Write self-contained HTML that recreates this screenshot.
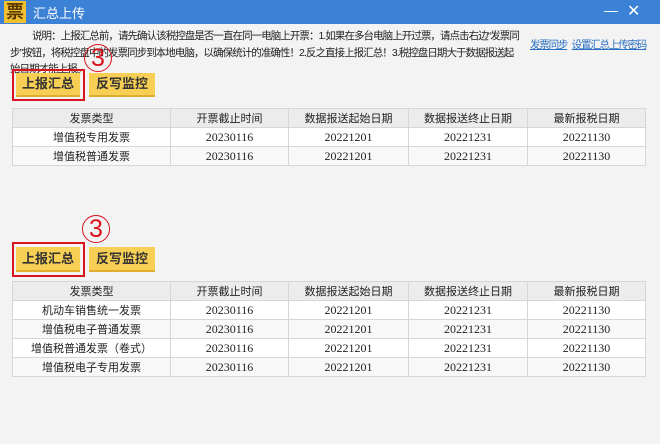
<!DOCTYPE html><html><head><meta charset="utf-8"><style>
body{margin:0;width:660px;height:444px;background:#f3f3f3;font-family:"Liberation Sans","Noto Sans CJK SC",sans-serif;position:relative;overflow:hidden;color:#222}
.t{position:absolute;left:0;top:0;width:660px;height:24px;background:#3b82d6;color:#fff;font-size:13px}
.a{position:absolute}
.p{font-size:10.5px;line-height:16.5px;white-space:nowrap;letter-spacing:-0.95px}
.btn{position:absolute;background:#f7cf55;border-bottom:2px solid #e0ad30;font-size:13px;font-weight:bold;text-align:center;color:#333}
.rb{position:absolute;border:2px solid #d9141e;box-sizing:border-box}
.c3{position:absolute;font-size:25px;color:#d9141e;width:26px;height:26px;border:1.5px solid #d9141e;border-radius:50%;text-align:center;line-height:26px}
table{position:absolute;left:12px;border-collapse:collapse;font-size:11px;width:634px}
td{border:1px solid #d6d6d6;text-align:center;height:18px;padding:0;background:#fff}
td.n{font-family:"Liberation Serif",serif;font-size:12px}
tr:first-child td{background:#ececec}
tr:nth-child(odd):not(:first-child) td{background:#f8f8f8}
.lk{color:#2a6fc0;text-decoration:underline;font-size:10.5px;letter-spacing:-1.2px}
</style></head><body>
<div class="t"><div class="a" style="left:4px;top:1px;width:22px;height:22px;background:#f0c030;color:#5a3a00;font-weight:bold;font-size:18px;line-height:22px;text-align:center">票</div><span class="a" style="left:33px;top:3px">汇总上传</span><span class="a" style="left:604px;top:2px;font-size:14px">—</span><span class="a" style="left:627px;top:1px;font-size:16px">✕</span></div>
<div class="a p" style="left:10px;top:28px"><span style="display:inline-block;width:22px"></span>说明：上报汇总前，请先确认该税控盘是否一直在同一电脑上开票：1.如果在多台电脑上开过票，请点击右边“发票同<br>步”按钮，将税控盘中的发票同步到本地电脑，以确保统计的准确性！2.反之直接上报汇总！3.税控盘日期大于数据报送起<br>始日期才能上报。</div>
<div class="a" style="left:530px;top:35px;white-space:nowrap"><span class="lk">发票同步</span> <span class="lk">设置汇总上传密码</span></div>
<div class="c3" style="left:84px;top:44px">3</div>
<div class="btn" style="left:16px;top:73px;width:64px;height:22px;line-height:22px">上报汇总</div>
<div class="rb" style="left:12px;top:69px;width:73px;height:32px"></div>
<div class="btn" style="left:89px;top:73px;width:66px;height:22px;line-height:22px">反写监控</div>
<table style="top:108px"><tr><td style="width:157px">发票类型</td><td style="width:117px">开票截止时间</td><td style="width:119px">数据报送起始日期</td><td style="width:118px">数据报送终止日期</td><td>最新报税日期</td></tr>
<tr><td>增值税专用发票</td><td class="n">20230116</td><td class="n">20221201</td><td class="n">20221231</td><td class="n">20221130</td></tr>
<tr><td>增值税普通发票</td><td class="n">20230116</td><td class="n">20221201</td><td class="n">20221231</td><td class="n">20221130</td></tr></table>
<div class="c3" style="left:82px;top:215px">3</div>
<div class="btn" style="left:16px;top:247px;width:64px;height:23px;line-height:23px">上报汇总</div>
<div class="rb" style="left:12px;top:242px;width:73px;height:35px"></div>
<div class="btn" style="left:89px;top:247px;width:66px;height:23px;line-height:23px">反写监控</div>
<table style="top:281px"><tr><td style="width:157px">发票类型</td><td style="width:117px">开票截止时间</td><td style="width:119px">数据报送起始日期</td><td style="width:118px">数据报送终止日期</td><td>最新报税日期</td></tr>
<tr><td>机动车销售统一发票</td><td class="n">20230116</td><td class="n">20221201</td><td class="n">20221231</td><td class="n">20221130</td></tr>
<tr><td>增值税电子普通发票</td><td class="n">20230116</td><td class="n">20221201</td><td class="n">20221231</td><td class="n">20221130</td></tr>
<tr><td>增值税普通发票（卷式）</td><td class="n">20230116</td><td class="n">20221201</td><td class="n">20221231</td><td class="n">20221130</td></tr>
<tr><td>增值税电子专用发票</td><td class="n">20230116</td><td class="n">20221201</td><td class="n">20221231</td><td class="n">20221130</td></tr></table>
</body></html>
